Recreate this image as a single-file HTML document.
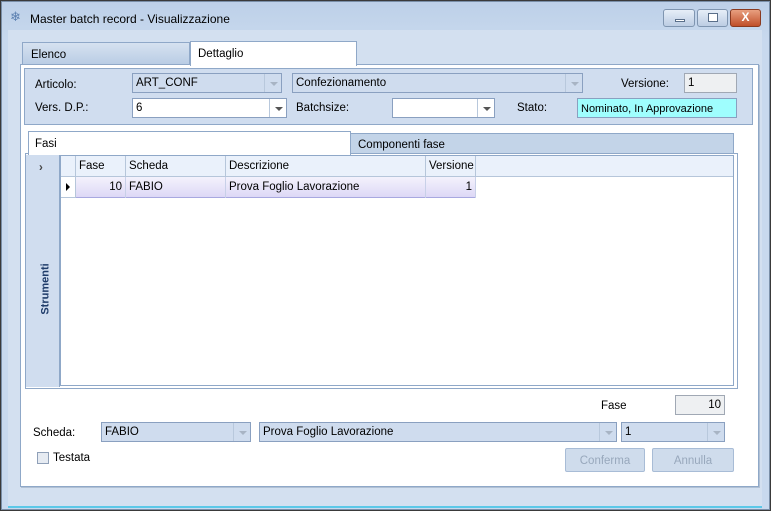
<!DOCTYPE html>
<html><head><meta charset="utf-8"><style>
*{box-sizing:border-box;margin:0;padding:0}
body{width:771px;height:511px;overflow:hidden;background:#3a3a3a;font-family:"Liberation Sans",sans-serif;font-size:11.5px;color:#000;position:relative}
.a{position:absolute}
.win{left:1px;top:1px;width:769px;height:509px;background:linear-gradient(#bdd0e8,#c8d9ee 40px,#c8d9ee);border:1px solid #7a8fa8}
.client{left:8px;top:30px;width:754px;height:478px;background:#d3e0f0;border-bottom:2px solid #5bc8e8}
.lbl{position:absolute;white-space:nowrap}
.cb{position:absolute;border:1px solid #8aa0c0;background:#cfdcee;height:20px;padding:3px 3px 2px;white-space:nowrap}
.cb.w{background:#fff}
.arr{position:absolute;right:0;top:0;width:17px;height:100%;border-left:1px solid #b8c8dc}
.arr:after{content:"";position:absolute;left:5px;top:8px;border-left:4px solid transparent;border-right:4px solid transparent;border-top:4px solid #a8b4c4}
.arr.d:after{border-top-color:#555}
.hd{position:absolute;top:0;height:21px;border-right:1px solid #b6c6da;padding:4px 3px}
.rw{position:absolute;top:21px;height:21px;border-right:1px solid #c8d0e8;padding:4px 3px;white-space:nowrap}
.btn{position:absolute;border:1px solid #a8bcd6;border-radius:2px;background:#cfdcec;color:#98a8bc;text-align:center;padding-top:6px}
.tb{position:absolute;top:9px;height:18px;border:1px solid #7f95b0;border-radius:3px;background:linear-gradient(#e6eef8,#bccde3)}
</style></head><body>
<div class="a win"></div>
<div class="a" style="left:10px;top:10px;width:14px;height:14px;color:#5a7fb0;font-size:13px;line-height:14px">❄</div>
<div class="lbl" style="left:30px;top:12px;font-size:12px">Master batch record - Visualizzazione</div>
<div class="tb" style="left:663px;width:32px"><div class="a" style="left:11px;top:9px;width:10px;height:3px;background:#fff;border:1px solid #5a6f8a"></div></div>
<div class="tb" style="left:697px;width:31px"><div class="a" style="left:10px;top:3px;width:10px;height:9px;background:#fff;border:1px solid #5a6f8a"></div></div>
<div class="tb" style="left:730px;width:31px;background:linear-gradient(#e8a080,#c0502a);border-color:#8a3a20;color:#fff;text-align:center;font-weight:bold;font-size:12px;line-height:15px">X</div>
<div class="a client"></div>
<div class="a" style="left:22px;top:42px;width:168px;height:23px;background:linear-gradient(#d6e2f0,#b8cce4);border:1px solid #8fa8c8;border-bottom:none"></div>
<div class="lbl" style="left:31px;top:49px">Elenco</div>
<div class="a" style="left:20px;top:64px;width:739px;height:423px;background:#fff;border:1px solid #8fa8c8;box-shadow:1px 1px 0 #b0c0d4"></div>
<div class="a" style="left:190px;top:41px;width:167px;height:25px;background:#fff;border:1px solid #8fa8c8;border-bottom:none"></div>
<div class="lbl" style="left:198px;top:48px">Dettaglio</div>
<div class="a" style="left:24px;top:68px;width:729px;height:57px;background:#d0ddef;border:1px solid #8fa8c8"></div>
<div class="lbl" style="left:35px;top:79px">Articolo:</div>
<div class="cb" style="left:132px;top:73px;width:150px">ART_CONF<div class="arr"></div></div>
<div class="cb" style="left:292px;top:73px;width:291px">Confezionamento<div class="arr"></div></div>
<div class="lbl" style="left:621px;top:78px">Versione:</div>
<div class="cb" style="left:684px;top:73px;width:53px;background:#eef0f2;border-color:#a0a8b4">1</div>
<div class="lbl" style="left:35px;top:102px">Vers. D.P.:</div>
<div class="cb w" style="left:132px;top:98px;width:155px">6<div class="arr d"></div></div>
<div class="lbl" style="left:296px;top:102px">Batchsize:</div>
<div class="cb w" style="left:392px;top:98px;width:103px"><div class="arr d"></div></div>
<div class="lbl" style="left:517px;top:102px">Stato:</div>
<div class="cb" style="left:577px;top:98px;width:160px;background:#9ffefe;font-size:11px;padding-top:4px">Nominato, In Approvazione</div>
<div class="a" style="left:350px;top:133px;width:384px;height:22px;background:#c3d4e8;border:1px solid #8fa8c8"></div>
<div class="lbl" style="left:358px;top:139px">Componenti fase</div>
<div class="a" style="left:25px;top:153px;width:713px;height:236px;border:1px solid #8fa8c8;background:#fff"></div>
<div class="a" style="left:28px;top:131px;width:323px;height:24px;background:#fff;border:1px solid #8fa8c8;border-bottom:none"></div>
<div class="lbl" style="left:35px;top:138px">Fasi</div>
<div class="a" style="left:26px;top:155px;width:34px;height:232px;background:#d0ddef;border-right:1px solid #8fa8c8"></div>
<div class="lbl" style="left:39px;top:162px;color:#444;font-weight:bold">›</div>
<div class="lbl" style="left:20px;top:283px;transform:rotate(-90deg);font-weight:bold;color:#1f3c6a;font-size:11px">Strumenti</div>
<div class="a" style="left:60px;top:155px;width:674px;height:231px;border:1px solid #8fa8c8;background:#fff">
 <div class="a" style="left:0;top:0;width:672px;height:21px;background:#eaf1fb;border-bottom:1px solid #b6c6da"></div>
 <div class="hd" style="left:0;width:15px"></div>
 <div class="hd" style="left:15px;width:50px">Fase</div>
 <div class="hd" style="left:65px;width:100px">Scheda</div>
 <div class="hd" style="left:165px;width:200px">Descrizione</div>
 <div class="hd" style="left:365px;width:50px">Versione</div>
 <div class="a" style="left:0;top:21px;width:15px;height:21px;border-right:1px solid #b6c6da;border-bottom:1px solid #b6c6da"><div class="a" style="left:5px;top:6px;border-top:4px solid transparent;border-bottom:4px solid transparent;border-left:4px solid #000"></div></div>
 <div class="a" style="left:15px;top:21px;width:400px;height:21px;background:linear-gradient(#f4f2fc,#ddd8f6);border-bottom:1px solid #a8a8e0"></div>
 <div class="rw" style="left:15px;width:50px;text-align:right">10</div>
 <div class="rw" style="left:65px;width:100px">FABIO</div>
 <div class="rw" style="left:165px;width:200px">Prova Foglio Lavorazione</div>
 <div class="rw" style="left:365px;width:50px;text-align:right">1</div>
</div>
<div class="lbl" style="left:601px;top:400px">Fase</div>
<div class="cb" style="left:675px;top:395px;width:50px;text-align:right;background:#eef0f2;border-color:#a0a8b4">10</div>
<div class="lbl" style="left:33px;top:427px">Scheda:</div>
<div class="cb" style="left:101px;top:422px;width:150px">FABIO<div class="arr"></div></div>
<div class="cb" style="left:259px;top:422px;width:358px">Prova Foglio Lavorazione<div class="arr"></div></div>
<div class="cb" style="left:621px;top:422px;width:104px">1<div class="arr"></div></div>
<div class="a" style="left:37px;top:452px;width:12px;height:12px;border:1px solid #8fa0b8;background:#e6ebf2"></div>
<div class="lbl" style="left:53px;top:452px">Testata</div>
<div class="btn" style="left:565px;top:448px;width:80px;height:24px">Conferma</div>
<div class="btn" style="left:652px;top:448px;width:82px;height:24px">Annulla</div>
</body></html>
